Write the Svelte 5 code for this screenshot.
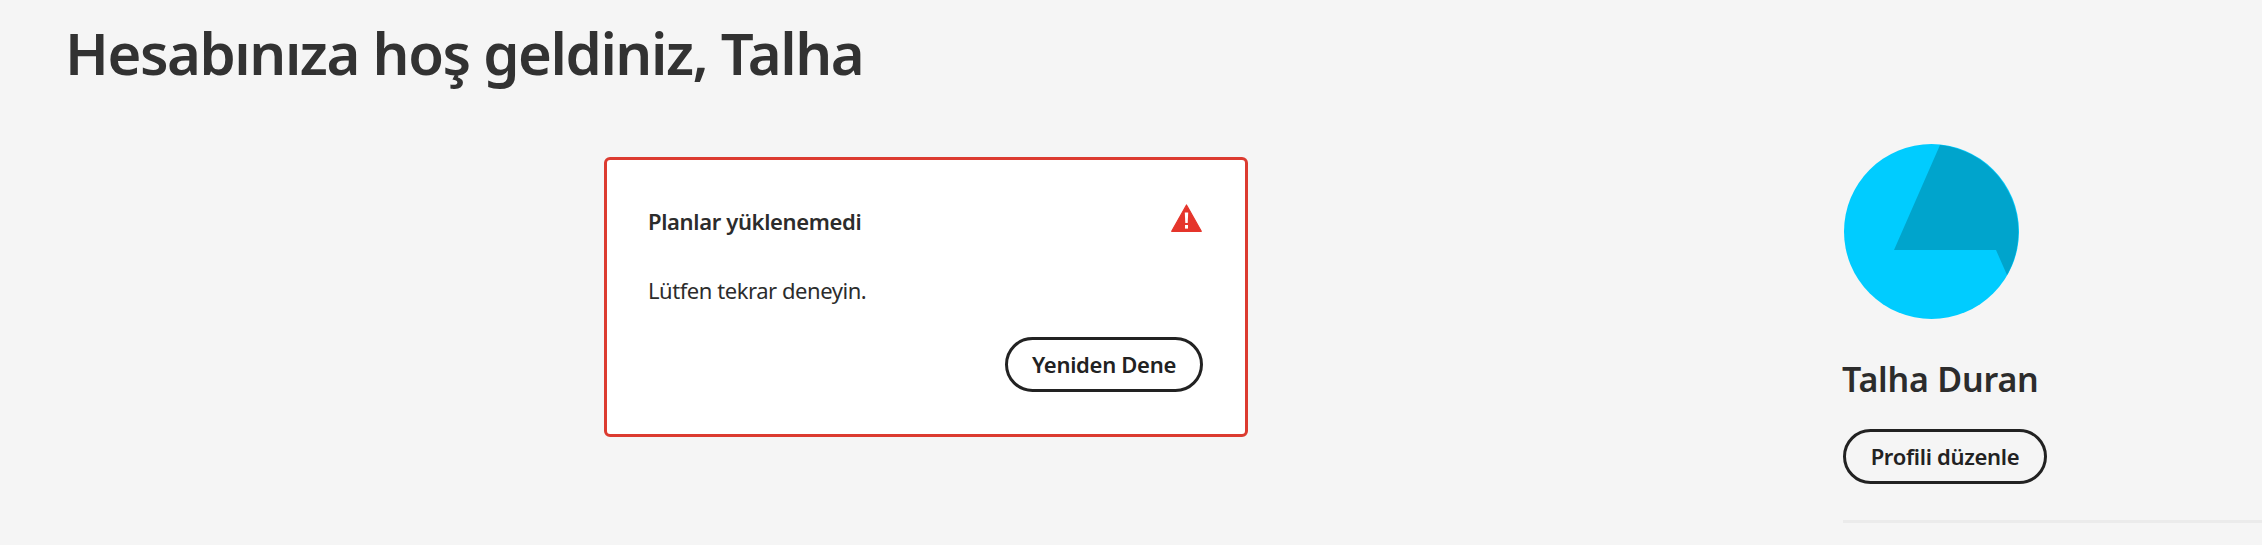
<script>
	const title = "Hesabınıza hoş geldiniz, Talha";
	const userName = "Talha Duran";
</script>

<div class="page">
	<h1>{title}</h1>

	<div class="content">
		<main class="plans">
			<section class="error-card">
				<header>
					<h2>Planlar yüklenemedi</h2>
					<svg class="alert" viewBox="0 0 31 28" aria-hidden="true">
						<path d="M15.5 1 L30.3 27.3 H0.7 Z" fill="#e5352b" stroke="#e5352b" stroke-width="1.2" stroke-linejoin="round" />
						<path d="M13.8 8.5 H17.2 L16.7 19 H14.3 Z" fill="#fff" />
						<rect x="14" y="21" width="3" height="3.6" fill="#fff" />
					</svg>
				</header>
				<p>Lütfen tekrar deneyin.</p>
				<div class="actions">
					<button class="retry">Yeniden Dene</button>
				</div>
			</section>
		</main>

		<aside class="profile">
			<svg class="avatar" viewBox="0 0 175 175" aria-hidden="true">
				<circle cx="87.5" cy="87.5" r="87.5" fill="#00ccff" />
				<path d="M96 1 A87.5 87.5 0 0 1 163 131 L152 106 H50 Z" fill="#00a4cc" />
			</svg>
			<h3>{userName}</h3>
			<button class="edit">Profili düzenle</button>
			<hr />
		</aside>
	</div>
</div>

<style>
	:global(body) {
		background: #f5f5f5;
		overflow: hidden;
	}

	.page {
		height: 545px;
		box-sizing: border-box;
		padding-top: 17px;
		font-family: "Noto Sans", "Lato", sans-serif;
		color: #2c2c2c;
		overflow: hidden;
	}

	h1 {
		margin: 0 0 0 65px;
		font-size: 58px;
		line-height: 72px;
		font-weight: 600;
		letter-spacing: -1.45px;
		color: #323232;
	}

	.content {
		display: grid;
		grid-template-columns: 1843px 1fr;
		margin-top: 55px;
	}

	.plans {
		padding-left: 604px;
		padding-top: 13px;
	}

	.error-card {
		width: 644px;
		height: 280px;
		box-sizing: border-box;
		padding: 45px 42px 0 41px;
		background: #fff;
		border: 3px solid #dc3b30;
		border-radius: 6px;
	}

	header {
		display: flex;
		justify-content: space-between;
		align-items: center;
		height: 32px;
	}

	h2 {
		margin: 0;
		font-size: 22px;
		font-weight: 600;
		letter-spacing: -0.35px;
	}

	.alert {
		width: 31px;
		height: 28px;
		margin: 0 1px 6px 0;
	}

	p {
		margin: 37px 0 0;
		font-size: 22px;
		line-height: 32px;
		letter-spacing: -0.45px;
	}

	.actions {
		display: flex;
		justify-content: flex-end;
		margin-top: 31px;
	}

	button {
		box-sizing: border-box;
		height: 55px;
		padding: 0 0 2px;
		background: transparent;
		border: 3px solid #222;
		border-radius: 28px;
		font-family: inherit;
		font-size: 22px;
		font-weight: 600;
		letter-spacing: -0.3px;
		color: #222;
	}

	.retry {
		width: 198px;
	}

	.edit {
		width: 204px;
	}

	.profile {
		display: flex;
		flex-direction: column;
		align-items: flex-start;
	}

	.avatar {
		width: 175px;
		height: 175px;
		margin-left: 1px;
	}

	h3 {
		margin: 38px 0 0 -1px;
		font-size: 34px;
		line-height: 44px;
		font-weight: 600;
		letter-spacing: -0.2px;
	}

	.edit {
		margin-top: 28px;
	}

	hr {
		width: 100%;
		height: 3px;
		margin: 36px 0 0;
		border: 0;
		background: #ebebeb;
	}
</style>
